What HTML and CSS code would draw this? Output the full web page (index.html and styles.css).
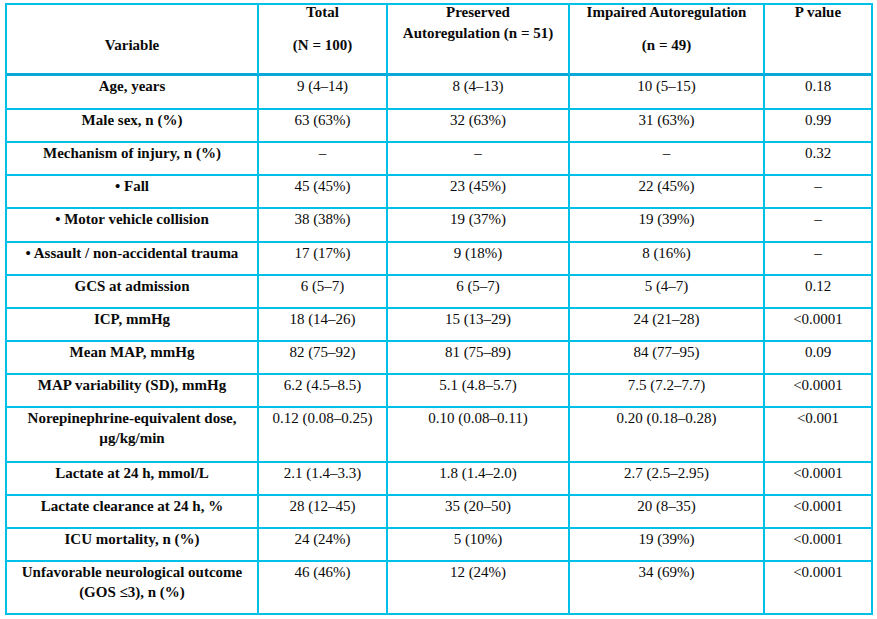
FILE: index.html
```html
<!DOCTYPE html>
<html lang="en">
<head>
<meta charset="utf-8">
<title>Autoregulation table</title>
<link rel="stylesheet" href="styles.css">
</head>
<body>
<table class="t">
  <tr class="head">
    <th class="c1"><div class="hw"><p class="var">Variable</p></div></th>
    <th class="c2"><div class="hw"><p class="para">Total</p><p>(N = 100)</p></div></th>
    <th class="c3"><div class="hw"><p>Preserved<br>Autoregulation (n = 51)</p></div></th>
    <th class="c4"><div class="hw"><p class="para">Impaired Autoregulation</p><p>(n = 49)</p></div></th>
    <th class="c5"><div class="hw"><p>P value</p></div></th>
  </tr>
  <tr class="r34"><td class="lab">Age, years</td><td>9 (4–14)</td><td>8 (4–13)</td><td>10 (5–15)</td><td>0.18</td></tr>
  <tr><td class="lab">Male sex, n (%)</td><td>63 (63%)</td><td>32 (63%)</td><td>31 (63%)</td><td>0.99</td></tr>
  <tr><td class="lab">Mechanism of injury, n (%)</td><td>–</td><td>–</td><td>–</td><td>0.32</td></tr>
  <tr><td class="lab">• Fall</td><td>45 (45%)</td><td>23 (45%)</td><td>22 (45%)</td><td>–</td></tr>
  <tr class="r34"><td class="lab">• Motor vehicle collision</td><td>38 (38%)</td><td>19 (37%)</td><td>19 (39%)</td><td>–</td></tr>
  <tr><td class="lab">• Assault / non-accidental trauma</td><td>17 (17%)</td><td>9 (18%)</td><td>8 (16%)</td><td>–</td></tr>
  <tr><td class="lab">GCS at admission</td><td>6 (5–7)</td><td>6 (5–7)</td><td>5 (4–7)</td><td>0.12</td></tr>
  <tr><td class="lab">ICP, mmHg</td><td>18 (14–26)</td><td>15 (13–29)</td><td>24 (21–28)</td><td>&lt;0.0001</td></tr>
  <tr><td class="lab">Mean MAP, mmHg</td><td>82 (75–92)</td><td>81 (75–89)</td><td>84 (77–95)</td><td>0.09</td></tr>
  <tr><td class="lab">MAP variability (SD), mmHg</td><td>6.2 (4.5–8.5)</td><td>5.1 (4.8–5.7)</td><td>7.5 (7.2–7.7)</td><td>&lt;0.0001</td></tr>
  <tr class="r55"><td class="lab">Norepinephrine-equivalent dose,<br>µg/kg/min</td><td>0.12 (0.08–0.25)</td><td>0.10 (0.08–0.11)</td><td>0.20 (0.18–0.28)</td><td>&lt;0.001</td></tr>
  <tr><td class="lab">Lactate at 24 h, mmol/L</td><td>2.1 (1.4–3.3)</td><td>1.8 (1.4–2.0)</td><td>2.7 (2.5–2.95)</td><td>&lt;0.0001</td></tr>
  <tr><td class="lab">Lactate clearance at 24 h, %</td><td>28 (12–45)</td><td>35 (20–50)</td><td>20 (8–35)</td><td>&lt;0.0001</td></tr>
  <tr><td class="lab">ICU mortality, n (%)</td><td>24 (24%)</td><td>5 (10%)</td><td>19 (39%)</td><td>&lt;0.0001</td></tr>
  <tr class="r53"><td class="lab">Unfavorable neurological outcome<br>(GOS ≤3), n (%)</td><td>46 (46%)</td><td>12 (24%)</td><td>34 (69%)</td><td>&lt;0.0001</td></tr>
</table>
</body>
</html>
```
FILE: styles.css
```css
html, body {
  margin: 0;
  padding: 0;
  background: #ffffff;
}

body {
  font-family: "Liberation Serif", "Times New Roman", serif;
  font-size: 15px;
  color: #0a0a0a;
}

.t {
  margin: 3px 0 0 5px;
  width: 868px;
  table-layout: fixed;
  border-collapse: separate;
  border-spacing: 0;
  border-top: 2px solid #00c0e8;
  border-left: 2px solid #00c0e8;
}

.t th,
.t td {
  box-sizing: border-box;
  border-right: 2px solid #00c0e8;
  border-bottom: 2px solid #00c0e8;
  padding: 0 4px;
  text-align: center;
  vertical-align: top;
  line-height: 20px;
  height: 33px;
}

.t .head th {
  height: 71px;
  font-weight: bold;
  line-height: 21px;
  border-bottom: 3px solid #0aa8d8;
}

.c1 { width: 252px; }
.c2 { width: 129px; }
.c3 { width: 182px; }
.c4 { width: 195px; }
.c5 { width: 108px; }

.hw {
  margin-top: -3px;
}

.hw p {
  margin: 0;
}

.hw .para {
  margin-bottom: 12px;
}

.hw .var {
  margin-top: 33px;
}

.t .r34 td { height: 34px; }
.t .r55 td { height: 55px; }
.t .r53 td { height: 53px; }

.lab {
  font-weight: bold;
}
```
